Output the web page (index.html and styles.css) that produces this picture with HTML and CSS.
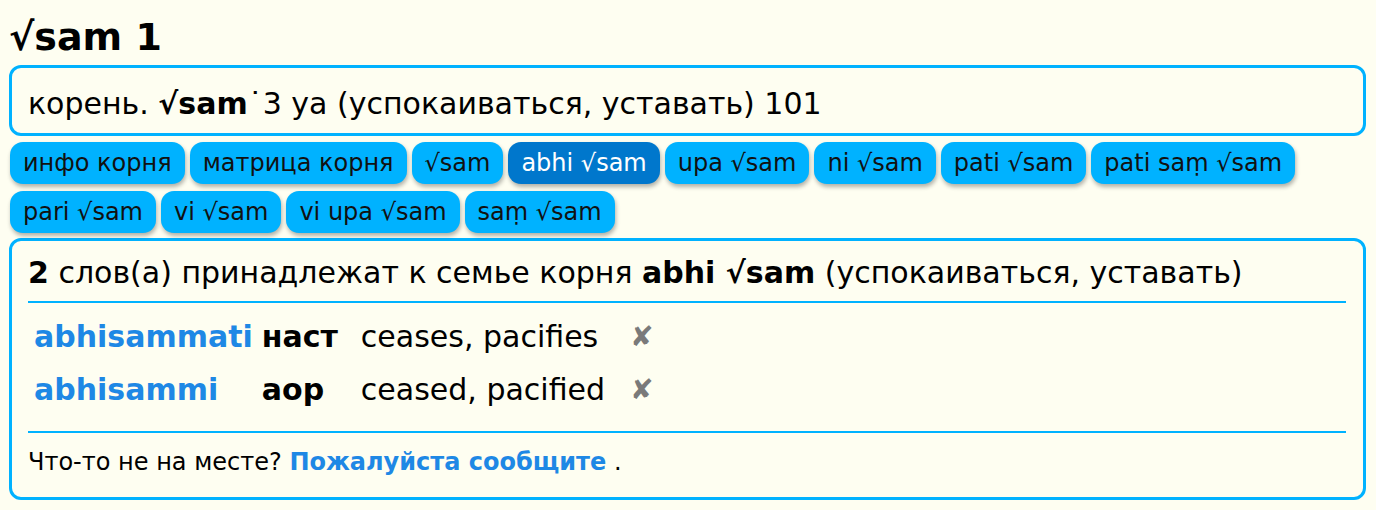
FILE: index.html
```html
<!DOCTYPE html>
<html lang="ru">
<head>
<meta charset="utf-8">
<title>√sam 1</title>
<link rel="stylesheet" href="styles.css">
</head>
<body>
<div class="page">
  <h1 class="title">√sam 1</h1>
  <div class="box root-box">
    корень. <b>√sam</b>˙3 ya (успокаиваться, уставать) 101
  </div>
  <div class="tabs">
    <span class="tab">инфо корня</span>
    <span class="tab">матрица корня</span>
    <span class="tab">√sam</span>
    <span class="tab active">abhi √sam</span>
    <span class="tab">upa √sam</span>
    <span class="tab">ni √sam</span>
    <span class="tab">pati √sam</span>
    <span class="tab">pati saṃ √sam</span>
    <span class="tab">pari √sam</span>
    <span class="tab">vi √sam</span>
    <span class="tab">vi upa √sam</span>
    <span class="tab">saṃ √sam</span>
  </div>
  <div class="box family-box">
    <div class="family-head"><b>2</b> слов(а) принадлежат к семье корня <b>abhi √sam</b> (успокаиваться, уставать)</div>
    <div class="words">
      <span class="w-word">abhisammati</span>
      <span class="w-gram">наст</span>
      <span class="w-mean">ceases, pacifies</span>
      <span class="w-mark">✘</span>
      <span class="w-word">abhisammi</span>
      <span class="w-gram">аор</span>
      <span class="w-mean">ceased, pacified</span>
      <span class="w-mark">✘</span>
    </div>
    <div class="footer">Что-то не на месте? <a class="report" href="#">Пожалуйста сообщите</a> .</div>
  </div>
</div>
</body>
</html>
```
FILE: styles.css
```css
html, body {
  margin: 0;
  padding: 0;
  background: #fefef1;
}
body {
  font-family: "DejaVu Sans", sans-serif;
  color: #000;
}
.page {
  padding: 0 10px 0 9px;
}
.title {
  font-size: 38px;
  font-weight: bold;
  line-height: 42px;
  margin: 16px 0 7px 0;
}
.box {
  border: 3px solid #00b2ff;
  border-radius: 12px;
}
.root-box {
  font-size: 30px;
  line-height: 34px;
  padding: 19px 16px 12px 16px;
}
.tabs {
  display: flex;
  flex-wrap: wrap;
  gap: 7px 5px;
  margin: 6px 0 5px 1px;
}
.tab {
  background: #00b2ff;
  color: #111;
  font-size: 24px;
  line-height: 28px;
  padding: 7px 13px;
  border-radius: 13px;
  box-shadow: 1px 3px 4px rgba(0, 0, 0, 0.3);
}
.tab.active {
  background: #0077cc;
  color: #fff;
}
.family-box {
  padding: 16px 17px 21px 16px;
}
.family-head {
  font-size: 30px;
  line-height: 32px;
  padding-bottom: 12px;
  border-bottom: 2px solid #00b2ff;
}
.words {
  display: grid;
  grid-template-columns: auto 99px auto auto;
  justify-content: start;
  align-items: center;
  padding: 8px 0 14px 0;
  border-bottom: 2px solid #00b2ff;
}
.words > span {
  font-size: 30px;
  line-height: 34px;
  padding: 9px 0 10px 0;
}
.w-word {
  color: #1e88e5;
  font-weight: bold;
  padding-left: 6px !important;
  padding-right: 9px !important;
}
.w-gram {
  font-weight: bold;
}
.w-mean {
  padding-right: 25px !important;
}
.w-mark {
  color: #7a7a7a;
  font-size: 28px !important;
}
.footer {
  font-size: 24px;
  line-height: 28px;
  padding-top: 15px;
}
.report {
  color: #1e88e5;
  font-weight: bold;
  text-decoration: none;
}
```
